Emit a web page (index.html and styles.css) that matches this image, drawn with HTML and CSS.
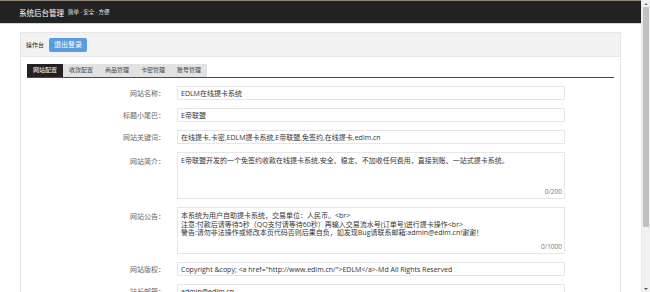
FILE: index.html
```html
<!DOCTYPE html>
<html lang="zh-CN">
<head>
    <meta charset="UTF-8">
    <meta name="viewport" content="width=device-width, initial-scale=1.0">
    <title>系统后台管理</title>
    <link rel="stylesheet" href="styles.css">
</head>
<body>
    <div class="window">
        <div class="page">
            <header class="topbar">
                <span class="brand">系统后台管理</span>
                <span class="slogan">简单 · 安全 · 方便</span>
            </header>

            <div class="panel">
                <div class="panel-head">
                    <span class="panel-title">操作台</span>
                    <button type="button" class="btn-logout">退出登录</button>
                </div>
                <div class="panel-body">
                    <ul class="tabs">
                        <li class="tab active">网站配置</li>
                        <li class="tab">收款配置</li>
                        <li class="tab">商品管理</li>
                        <li class="tab">卡密管理</li>
                        <li class="tab">账号管理</li>
                    </ul>

                    <form class="form">
                        <label class="form-label" for="sitename">网站名称：</label>
                        <input class="form-input" type="text" id="sitename" value="EDLM在线提卡系统">

                        <label class="form-label" for="suffix">标题小尾巴：</label>
                        <input class="form-input" type="text" id="suffix" value="E帝联盟">

                        <label class="form-label" for="keywords">网站关键词：</label>
                        <input class="form-input" type="text" id="keywords" value="在线提卡,卡密,EDLM提卡系统,E帝联盟,免签约,在线提卡,edlm.cn">

                        <label class="form-label top" for="intro">网站简介：</label>
                        <div class="area-wrap">
                            <textarea class="form-area" id="intro">E帝联盟开发的一个免签约收款在线提卡系统,安全、稳定、不加收任何费用，直接到账、一站式提卡系统。</textarea>
                            <span class="counter">0/200</span>
                        </div>

                        <label class="form-label top" for="notice">网站公告：</label>
                        <div class="area-wrap">
                            <textarea class="form-area" id="notice">本系统为用户自助提卡系统，交易单位：人民币。&lt;br&gt;
注意:付款后请等待5秒（QQ支付请等待60秒）再输入交易流水号(订单号)进行提卡操作&lt;br&gt;
警告:请勿非法操作或修改本页代码否则后果自负，如发现Bug请联系邮箱:admin@edlm.cn!谢谢！</textarea>
                            <span class="counter">0/1000</span>
                        </div>

                        <label class="form-label" for="copyright">网站版权：</label>
                        <input class="form-input" type="text" id="copyright" value="Copyright &amp;copy; &lt;a href=&quot;http://www.edlm.cn/&quot;&gt;EDLM&lt;/a&gt;-Md All Rights Reserved">

                        <label class="form-label" for="email">站长邮箱：</label>
                        <input class="form-input" type="text" id="email" value="admin@edlm.cn">
                    </form>
                </div>
            </div>
        </div>

        <div class="scrollbar">
            <span class="arrow up"></span>
            <span class="thumb"></span>
            <span class="track"></span>
            <span class="arrow down"></span>
        </div>
    </div>
</body>
</html>
```

FILE: styles.css
```css
html, body {
    margin: 0;
    height: 100%;
    overflow: hidden;
}

body {
    font-family: "Open Sans", "Noto Sans CJK SC", sans-serif;
    font-size: 7px;
    color: #333;
    background: #fff;
}

.window {
    display: flex;
    height: 292px;
}

.page {
    flex: 1;
    overflow: hidden;
}

/* top bar */
.topbar {
    height: 22px;
    border-top: 1px solid #8f8474;
    border-bottom: 1px solid #d6d6d6;
    background: #222;
    display: flex;
    align-items: center;
    padding-left: 19px;
    gap: 4px;
}

.brand {
    color: #fff;
    font-size: 7.5px;
}

.slogan {
    color: #eee;
    font-size: 5.5px;
}

/* panel */
.panel {
    margin: 8px 20px 0;
    border: 1px solid #e6e6e6;
}

.panel-head {
    height: 23px;
    background: #f2f2f2;
    border-bottom: 1px solid #e6e6e6;
    display: flex;
    align-items: center;
    padding-left: 5px;
    gap: 5px;
}

.panel-title {
    font-size: 6px;
    color: #222;
}

.btn-logout {
    height: 14px;
    padding: 0 5px;
    border: none;
    border-radius: 2px;
    background: #5b9be0;
    color: #fff;
    font-family: inherit;
    font-size: 7px;
    line-height: 14px;
}

.panel-body {
    padding: 7px 6px 20px;
}

.tabs {
    list-style: none;
    margin: 0;
    padding: 0;
    display: flex;
    border-bottom: 1px solid #4a4a4a;
}

.tab {
    height: 13px;
    line-height: 13px;
    padding: 0 6px;
    font-size: 6px;
    background: #e2e2e2;
    color: #444;
}

.tab.active {
    background: #222;
    color: #fff;
}

/* form */
.form {
    display: grid;
    grid-template-columns: 138px 388px;
    column-gap: 12px;
    row-gap: 8px;
    margin-top: 8px;
    align-items: center;
}

.form-label {
    text-align: right;
    color: #666;
    font-size: 7px;
}

.form-label.top {
    align-self: start;
    padding-top: 4px;
}

.form-input,
.form-area {
    box-sizing: border-box;
    width: 100%;
    border: 1px solid #e6e6e6;
    background: #fff;
    color: #333;
    font-family: inherit;
    font-size: 7px;
    margin: 0;
    outline: none;
}

.form-input {
    height: 14px;
    padding: 0 3px;
}

.form-area {
    display: block;
    height: 47px;
    padding: 4px 3px;
    line-height: 8.7px;
    resize: none;
    overflow: hidden;
}

.area-wrap {
    position: relative;
}

.counter {
    position: absolute;
    right: 3px;
    bottom: 3px;
    font-size: 6.5px;
    color: #777;
}

/* fake scrollbar */
.scrollbar {
    width: 8px;
    background: #f1f1f1;
    border-left: 1px solid #e8e8e8;
    display: flex;
    flex-direction: column;
    align-items: center;
}

.arrow {
    width: 0;
    height: 0;
    margin: 3px 0 2px;
    border-left: 2px solid transparent;
    border-right: 2px solid transparent;
}

.arrow.up {
    border-bottom: 2px solid #777;
}

.arrow.down {
    border-top: 2px solid #505050;
}

.thumb {
    width: 6px;
    height: 220px;
    background: #c1c1c1;
}

.track {
    flex: 1;
}
```
